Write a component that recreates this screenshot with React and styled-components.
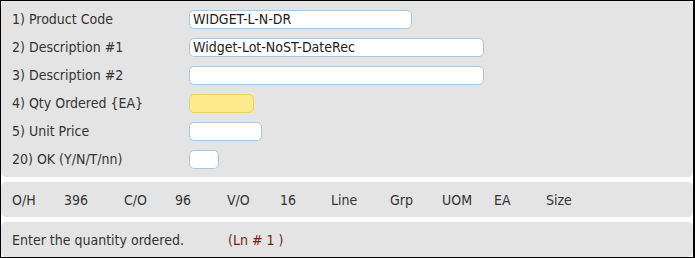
import React from "react";
import styled, { createGlobalStyle } from "styled-components";

const Global = createGlobalStyle`
  html, body { margin: 0; padding: 0; background: #fff; }
  body {
    font-family: "DejaVu Sans Condensed", "DejaVu Sans", sans-serif;
    font-stretch: condensed;
    font-size: 14px;
    color: #333;
  }
`;

const Frame = styled.div`
  box-sizing: border-box;
  width: 695px;
  height: 258px;
  border: 1px solid #000;
  border-right-width: 2px;
  background: #fff;
  display: flex;
  flex-direction: column;
  gap: 5px;
`;

const Panel = styled.div`
  background: #e4e4e4;
  border-radius: 5px;
`;

const FormPanel = styled(Panel)`
  padding: 4px 0 4px 11px;
  display: flex;
  flex-direction: column;
`;

const Row = styled.div`
  display: grid;
  grid-template-columns: 177px auto;
  align-items: center;
  height: 28px;
`;

const Label = styled.span`
  white-space: nowrap;
  margin-top: -1px;
`;

const Field = styled.input`
  box-sizing: border-box;
  height: 19px;
  width: ${(p) => p.$w}px;
  border: 1px solid ${(p) => (p.$active ? "#f0d060" : "#a9c7de")};
  background: ${(p) => (p.$active ? "#fbe98b" : "#fff")};
  border-radius: 5px;
  padding: 0 3px;
  margin: 0;
  font: inherit;
  color: #222;
  outline: none;
`;

const StatusPanel = styled(Panel)`
  height: 35px;
  padding-left: 11px;
  display: grid;
  grid-template-columns: 52px 60px 51px 52px 53px 51px 59px 52px 52px 52px auto;
  align-items: center;
`;

const Cell = styled.span`
  white-space: nowrap;
`;

const MessagePanel = styled(Panel)`
  height: 35px;
  padding-left: 11px;
  display: grid;
  grid-template-columns: 216px auto;
  align-items: center;
`;

const LineRef = styled.span`
  color: #7a1a1a;
`;

const fields = [
  { label: "1) Product Code", w: 223, v: "WIDGET-L-N-DR" },
  { label: "2) Description #1", w: 295, v: "Widget-Lot-NoST-DateRec" },
  { label: "3) Description #2", w: 295, v: "" },
  { label: "4) Qty Ordered {EA}", w: 65, v: "", active: true },
  { label: "5) Unit Price", w: 73, v: "" },
  { label: "20) OK (Y/N/T/nn)", w: 30, v: "" },
];

const status = ["O/H", "396", "C/O", "96", "V/O", "16", "Line", "Grp", "UOM", "EA", "Size"];

export default function App() {
  return (
    <>
      <Global />
      <Frame>
        <FormPanel>
          {fields.map((f) => (
            <Row key={f.label}>
              <Label>{f.label}</Label>
              <Field $w={f.w} $active={f.active} defaultValue={f.v} />
            </Row>
          ))}
        </FormPanel>
        <StatusPanel>
          {status.map((s, i) => (
            <Cell key={i}>{s}</Cell>
          ))}
        </StatusPanel>
        <MessagePanel>
          <span>Enter the quantity ordered.</span>
          <LineRef>(Ln # 1 )</LineRef>
        </MessagePanel>
      </Frame>
    </>
  );
}
